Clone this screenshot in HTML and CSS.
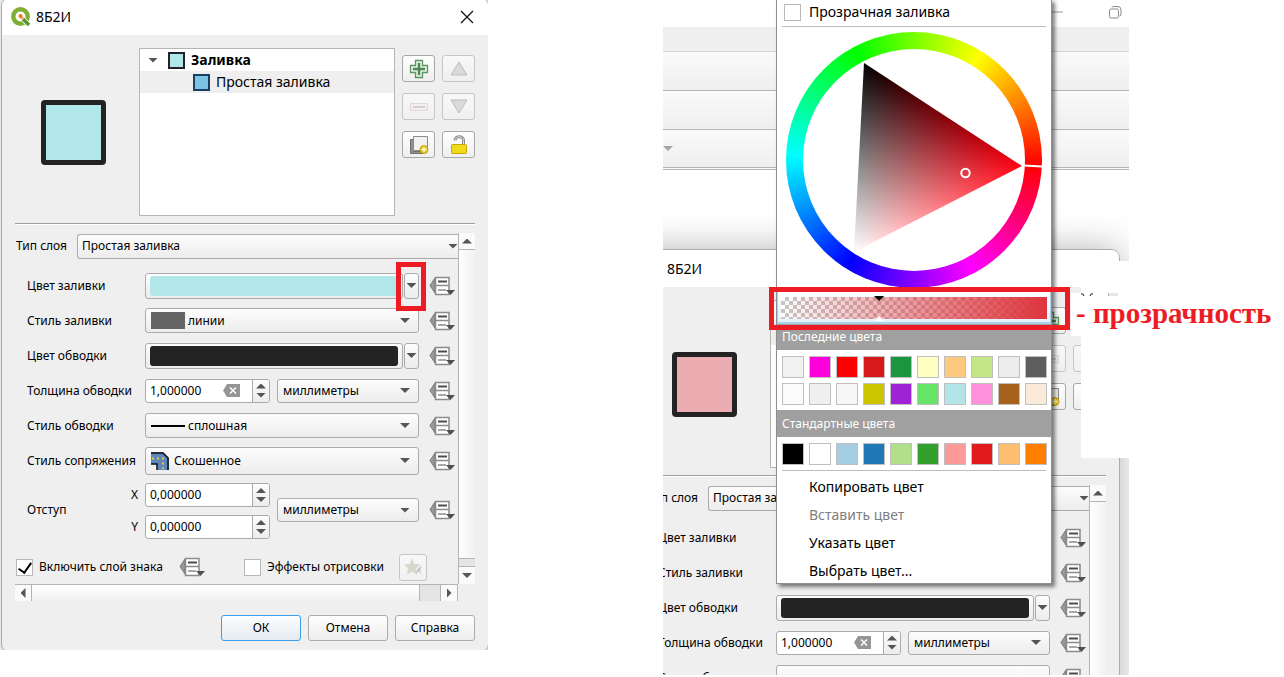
FILE: index.html
```html
<!DOCTYPE html>
<html lang="ru">
<head>
<meta charset="utf-8">
<title>8Б2И</title>
<link rel="stylesheet" href="styles.css">
</head>
<body>
<svg class="defs" aria-hidden="true">
  <symbol id="override" viewBox="0 0 27 20">
    <path d="M6 2 L1 9.500 L6 17 Z" fill="#999" stroke="#777"/>
    <path d="M6.500 1.500 H20 V18.500 H6.500 Z M6.500 9.500 H20" fill="#fff" stroke="#8b8b87" stroke-width="1.500"/>
    <path d="M9 5.500 H18" stroke="#4c4c4c" stroke-width="2"/>
    <path d="M9 14 H17" stroke="#8a8a8a" stroke-width="1.500"/>
    <path d="M17 14 H26 L21.500 19 Z" fill="#505050"/>
  </symbol>
  <symbol id="plus" viewBox="0 0 20 20">
    <path d="M6.500 1.500 H13.500 V6.500 H18.500 V13.500 H13.500 V18.500 H6.500 V13.500 H1.500 V6.500 H6.500 Z" fill="#e4f0e4" stroke="#5c9563" stroke-width="1.300"/>
    <path d="M10 4 V16 M4 10 H16" stroke="#4f8a56" stroke-width="2.500"/>
  </symbol>
  <symbol id="minus" viewBox="0 0 20 20">
    <path d="M1.500 6.500 H18.500 V13.500 H1.500 Z" fill="#f4efef" stroke="#e0d8d8"/>
    <path d="M4 10 H16" stroke="#d9d0d0" stroke-width="2"/>
  </symbol>
  <symbol id="up" viewBox="0 0 20 20"><path d="M10 3 L18 16 H2 Z" fill="#d8dadb" stroke="#b9bdc0"/></symbol>
  <symbol id="down" viewBox="0 0 20 20"><path d="M10 16 L2 3 H18 Z" fill="#d8dadb" stroke="#b9bdc0"/></symbol>
  <symbol id="copy" viewBox="0 0 20 20">
    <path d="M1.500 4.500 H4.500 V16.500 H15 V18.500 H1.500 Z" fill="#8e918c" stroke="#6f726d"/>
    <path d="M4.500 1.500 H18.500 V15.500 H4.500 Z" fill="#f1f1ef" stroke="#888a85"/>
    <circle cx="15" cy="14.500" r="4" fill="#e6c531" stroke="#c4a000"/>
    <path d="M15 11 L16 13.500 L18.500 14.500 L16 15.500 L15 18 L14 15.500 L11.500 14.500 L14 13.500 Z" fill="#fff6c8"/>
  </symbol>
  <symbol id="lock" viewBox="0 0 20 20">
    <path d="M6 5.500 C6 0.500 14.500 0.500 14.500 5.500 V10" fill="none" stroke="#8c8c8c" stroke-width="3"/>
    <path d="M6 5.500 C6 0.500 14.500 0.500 14.500 5.500 V10" fill="none" stroke="#dedede"/>
    <rect x="2.500" y="9.500" width="15" height="9" rx="1" fill="#f0da1c" stroke="#c9a800"/>
  </symbol>
  <symbol id="clear" viewBox="0 0 17 13">
    <path d="M0 6.500 L4 0 H17 V13 H4 Z" fill="#959595"/>
    <path d="M7 3.500 L13 9.500 M13 3.500 L7 9.500" stroke="#fff" stroke-width="1.500"/>
  </symbol>
</svg>

<main class="desk">

  <section class="shot shot-left">
    <div class="dialog">
      <header class="title">
        <svg class="logo" viewBox="0 0 20 20"><circle cx="9.500" cy="9.500" r="7.200" fill="none" stroke="#7fae33" stroke-width="4.400"/><path d="M11 11 L18.500 18.500" stroke="#fff" stroke-width="5"/><path d="M12 12 L18 18" stroke="#589632" stroke-width="3.500"/><path d="M9.500 9.500 L12 12" stroke="#f0b070" stroke-width="3"/><circle cx="9.500" cy="9" r="2" fill="#ee7913"/></svg>
        <h1 class="title-text">8Б2И</h1>
        <button class="close" aria-label="Закрыть"><svg viewBox="0 0 12 12"><path d="M0 0 L12 12 M12 0 L0 12" stroke="#111" stroke-width="1.300"/></svg></button>
      </header>
      <div class="body">
        <div class="head">
          <div class="preview"></div>
          <ul class="tree">
            <li class="node root"><i class="tri tri-down"></i><i class="chip"></i>Заливка</li>
            <li class="node leaf"><i class="chip chip-blue"></i>Простая заливка</li>
          </ul>
          <div class="tools">
            <button class="tool" aria-label="Добавить"><svg><use href="#plus"/></svg></button>
            <button class="tool off" aria-label="Выше" disabled><svg><use href="#up"/></svg></button>
            <button class="tool off" aria-label="Удалить" disabled><svg><use href="#minus"/></svg></button>
            <button class="tool off" aria-label="Ниже" disabled><svg><use href="#down"/></svg></button>
            <button class="tool" aria-label="Дублировать"><svg><use href="#copy"/></svg></button>
            <button class="tool" aria-label="Блокировка"><svg><use href="#lock"/></svg></button>
          </div>
        </div>
        <hr class="rule">
        <div class="scroll">
          <div class="pane">
            <div class="type">
              <label for="type1">Тип слоя</label>
              <div class="combo combo-cut"><select id="type1"><option>Простая заливка</option></select><i class="tri tri-down"></i></div>
            </div>
            <div class="form">
              <label for="fill1">Цвет заливки</label>
              <div class="color"><button id="fill1" class="swatch" aria-label="Цвет заливки"><i class="paint paint-cyan"></i></button><button class="drop drop-marked" aria-label="Меню цвета"><i class="tri tri-down"></i></button></div>
              <button class="over" aria-label="Переопределение"><svg><use href="#override"/></svg></button>

              <label for="style1">Стиль заливки</label>
              <div class="combo"><i class="block"></i><select id="style1"><option>линии</option></select><i class="tri tri-down"></i></div>
              <button class="over" aria-label="Переопределение"><svg><use href="#override"/></svg></button>

              <label for="stroke1">Цвет обводки</label>
              <div class="color"><button id="stroke1" class="swatch" aria-label="Цвет обводки"><i class="paint paint-dark"></i></button><button class="drop" aria-label="Меню цвета"><i class="tri tri-down"></i></button></div>
              <button class="over" aria-label="Переопределение"><svg><use href="#override"/></svg></button>

              <label for="width1">Толщина обводки</label>
              <div class="pair">
                <div class="spin"><input id="width1" value="1,000000"><svg class="clear"><use href="#clear"/></svg><span class="steps"><i class="tri tri-up"></i><i class="tri tri-down"></i></span></div>
                <div class="combo"><select aria-label="Единицы"><option>миллиметры</option></select><i class="tri tri-down"></i></div>
              </div>
              <button class="over" aria-label="Переопределение"><svg><use href="#override"/></svg></button>

              <label for="line1">Стиль обводки</label>
              <div class="combo"><i class="line"></i><select id="line1"><option>сплошная</option></select><i class="tri tri-down"></i></div>
              <button class="over" aria-label="Переопределение"><svg><use href="#override"/></svg></button>

              <label for="join1">Стиль сопряжения</label>
              <div class="combo combo-tall"><svg class="join" viewBox="0 0 18 18"><path d="M0 0 H12 L18 6 V18 H6 V12 H0 Z" fill="#5f87bb"/><path d="M0 1 H12 L17 6 V18 M0 12 H6 V18" fill="none" stroke="#111" stroke-width="1.500"/><path d="M1 6.500 H12 V17" fill="none" stroke="#e2d03a" stroke-width="2" stroke-dasharray="2 3"/></svg><select id="join1"><option>Скошенное</option></select><i class="tri tri-down"></i></div>
              <button class="over" aria-label="Переопределение"><svg><use href="#override"/></svg></button>

              <span>Отступ</span>
              <div class="pair">
                <div class="xy">
                  <div class="axis"><label for="x1">X</label><div class="spin"><input id="x1" value="0,000000"><span class="steps"><i class="tri tri-up"></i><i class="tri tri-down"></i></span></div></div>
                  <div class="axis"><label for="y1">Y</label><div class="spin"><input id="y1" value="0,000000"><span class="steps"><i class="tri tri-up"></i><i class="tri tri-down"></i></span></div></div>
                </div>
                <div class="combo"><select aria-label="Единицы отступа"><option>миллиметры</option></select><i class="tri tri-down"></i></div>
              </div>
              <button class="over" aria-label="Переопределение"><svg><use href="#override"/></svg></button>
            </div>
            <div class="options">
              <label class="check"><input type="checkbox" checked>Включить слой знака</label>
              <button class="over" aria-label="Переопределение"><svg><use href="#override"/></svg></button>
              <label class="check check-fx"><input type="checkbox">Эффекты отрисовки</label>
              <button class="star" aria-label="Настроить эффекты" disabled><svg viewBox="0 0 20 20"><path d="M9 1 L11.500 7 L17.500 7.500 L13 11.500 L14.500 17.500 L9 14.500 L4 17.500 L5 11.500 L1 7.500 L7 7 Z" fill="#d9d7cd"/><path d="M13 18 Q13 11 19 9 Q16 12 18 17 L15 14 Z" fill="#c4c4c4"/></svg></button>
            </div>
          </div>
          <div class="vbar"><span class="cap cap-top"><i class="tri tri-up"></i></span><span class="track"></span><span class="rest"></span><span class="cap"><i class="tri tri-down"></i></span></div>
          <div class="hbar"><span class="cap cap-left"><i class="tri tri-left"></i></span><span class="track"></span><span class="rest"></span><span class="cap cap-right"><i class="tri tri-right"></i></span></div>
        </div>
        <footer class="actions">
          <button class="act act-main">ОК</button>
          <button class="act">Отмена</button>
          <button class="act">Справка</button>
        </footer>
      </div>
    </div>
    <span class="mark mark-drop"></span>
  </section>

  <section class="shot shot-right">
    <div class="app">
      <div class="app-title"><svg class="app-min" viewBox="0 0 16 2"><path d="M0 1 H16" stroke="#999"/></svg><svg class="app-restore" viewBox="0 0 13 13"><rect x="0.500" y="3" width="9" height="9" rx="1.500" fill="none" stroke="#8c8c8c"/><path d="M3 1.500 Q3 0.500 5 0.500 H9 Q12 0.500 12 4 V9 L10.500 10" fill="none" stroke="#8c8c8c"/></svg></div>
      <div class="app-menu"></div>
      <div class="app-bar"></div>
      <div class="app-bar"></div>
      <div class="app-bar app-bar-last"><i class="tri tri-down"></i></div>
    </div>

    <div class="dialog dialog-back">
      <header class="title title-back"><h2 class="title-text">8Б2И</h2></header>
      <div class="body">
        <div class="head">
          <div class="preview preview-pink"></div>
          <ul class="tree"><li class="node root"></li><li class="node leaf"></li></ul>
          <div class="tools">
            <button class="tool" aria-label="Добавить"><svg><use href="#plus"/></svg></button>
            <button class="tool off" aria-label="Выше" disabled><svg><use href="#up"/></svg></button>
            <button class="tool off" aria-label="Удалить" disabled><svg><use href="#minus"/></svg></button>
            <button class="tool off" aria-label="Ниже" disabled><svg><use href="#down"/></svg></button>
            <button class="tool" aria-label="Дублировать"><svg><use href="#copy"/></svg></button>
            <button class="tool" aria-label="Блокировка"><svg><use href="#lock"/></svg></button>
          </div>
        </div>
        <hr class="rule">
        <div class="scroll">
          <div class="pane">
            <div class="type">
              <label for="type2">Тип слоя</label>
              <div class="combo combo-cut"><select id="type2"><option>Простая заливка</option></select><i class="tri tri-down"></i></div>
            </div>
            <div class="form">
              <span>Цвет заливки</span>
              <span></span>
              <button class="over" aria-label="Переопределение"><svg><use href="#override"/></svg></button>

              <span>Стиль заливки</span>
              <span></span>
              <button class="over" aria-label="Переопределение"><svg><use href="#override"/></svg></button>

              <label for="stroke2">Цвет обводки</label>
              <div class="color"><button id="stroke2" class="swatch" aria-label="Цвет обводки"><i class="paint paint-dark"></i></button><button class="drop" aria-label="Меню цвета"><i class="tri tri-down"></i></button></div>
              <button class="over" aria-label="Переопределение"><svg><use href="#override"/></svg></button>

              <label for="width2">Толщина обводки</label>
              <div class="pair">
                <div class="spin"><input id="width2" value="1,000000"><svg class="clear"><use href="#clear"/></svg><span class="steps"><i class="tri tri-up"></i><i class="tri tri-down"></i></span></div>
                <div class="combo"><select aria-label="Единицы"><option>миллиметры</option></select><i class="tri tri-down"></i></div>
              </div>
              <button class="over" aria-label="Переопределение"><svg><use href="#override"/></svg></button>

              <span>Стиль обводки</span>
              <div class="combo"></div>
              <button class="over" aria-label="Переопределение"><svg><use href="#override"/></svg></button>
            </div>
          </div>
          <div class="vbar"><span class="cap cap-top"><i class="tri tri-up"></i></span><span class="track"></span></div>
        </div>
      </div>
    </div>

    <span class="patch patch-big"></span>
    <span class="patch patch-small"></span>
    <svg class="scrap" viewBox="0 0 37 3"><path d="M0 1 H2 L3 3 M9 3 L10 1 H12" fill="none" stroke="#222"/><path d="M27 0 H37 V3 H27 Z" fill="#e6e6e6"/><path d="M27.500 0 V3" stroke="#b5b5b5"/></svg>

    <div class="menu">
      <label class="menu-check"><input type="checkbox">Прозрачная заливка</label>
      <hr class="menu-rule">
      <svg class="wheel-defs" aria-hidden="true"><defs>
        <clipPath id="tri"><path d="M78 31 L236 134 L68 220 Z"/></clipPath>
        <linearGradient id="gr" gradientUnits="userSpaceOnUse" x1="73" y1="126" x2="236" y2="134"><stop offset="0" stop-color="#000"/><stop offset="1" stop-color="#ff0010"/></linearGradient>
        <linearGradient id="gw" gradientUnits="userSpaceOnUse" x1="157" y1="82" x2="68" y2="220"><stop offset="0" stop-color="#000"/><stop offset="1" stop-color="#fff"/></linearGradient>
      </defs></svg>
      <div class="wheel">
        <svg viewBox="0 0 256 256">
          <circle cx="128" cy="128" r="111" fill="#fff"/>
          <g class="blend" clip-path="url(#tri)">
            <rect x="60" y="24" width="184" height="204" fill="url(#gr)"/>
            <rect class="add" x="60" y="24" width="184" height="204" fill="url(#gw)"/>
          </g>
          <path d="M238 133.500 L256 134.500" stroke="#fff" stroke-width="2"/>
          <circle cx="179.500" cy="141" r="4.200" fill="none" stroke="#fff" stroke-width="2"/>
        </svg>
      </div>
      <div class="alpha"><div class="ramp"><i class="knob knob-top"></i><i class="knob knob-bottom"></i></div></div>
      <h3 class="group">Последние цвета</h3>
      <div class="cells">
        <i class="cell c01"></i><i class="cell c02"></i><i class="cell c03"></i><i class="cell c04"></i><i class="cell c05"></i><i class="cell c06"></i><i class="cell c07"></i><i class="cell c08"></i><i class="cell c09"></i><i class="cell c10"></i>
        <i class="cell c11"></i><i class="cell c12"></i><i class="cell c13"></i><i class="cell c14"></i><i class="cell c15"></i><i class="cell c16"></i><i class="cell c17"></i><i class="cell c18"></i><i class="cell c19"></i><i class="cell c20"></i>
      </div>
      <h3 class="group group-std">Стандартные цвета</h3>
      <div class="cells">
        <i class="cell c21"></i><i class="cell c22"></i><i class="cell c23"></i><i class="cell c24"></i><i class="cell c25"></i><i class="cell c26"></i><i class="cell c27"></i><i class="cell c28"></i><i class="cell c29"></i><i class="cell c30"></i>
      </div>
      <hr class="menu-rule">
      <button class="item">Копировать цвет</button>
      <button class="item" disabled>Вставить цвет</button>
      <button class="item">Указать цвет</button>
      <button class="item">Выбрать цвет...</button>
    </div>
    <span class="mark mark-alpha"></span>
  </section>

  <p class="note">- прозрачность</p>
</main>
</body>
</html>
```
FILE: styles.css
```css
* { box-sizing: border-box; }
body {
  margin: 0;
  background: #fff;
  color: #000;
  font: 12px/16px "Noto Sans", "Open Sans", sans-serif;
}
button, input, select { font: inherit; color: inherit; margin: 0; padding: 0; }
button { border: 0; background: none; }
h1, h2, h3, p, ul { margin: 0; padding: 0; font-weight: 400; list-style: none; }
svg { display: block; }
.defs, .wheel-defs { position: absolute; width: 0; height: 0; }

/* free canvas with two windows and notes on it */
.desk { position: relative; min-height: 677px; overflow: hidden; }
.shot { position: absolute; top: 0; overflow: hidden; }
.shot-left { left: 0; width: 488px; height: 650px; background: #e6e6e6; }
.shot-right { left: 663px; width: 466px; height: 675px; background: #fff; }

.dialog {
  position: absolute;
  top: -3px;
  left: 1px;
  width: 488px;
  border: 1px solid #ababab;
  border-radius: 9px;
  background: #efefef;
  overflow: hidden;
}
.dialog-back {
  top: 249px;
  left: -31px;
  box-shadow: 0 0 36px rgba(0, 0, 0, .3);
}

.title { display: flex; align-items: center; gap: 5px; height: 37px; padding: 0 15px 0 9px; background: #fff; }
.title-back { padding-left: 34px; }
.logo { width: 20px; height: 20px; }
.title-text { flex: 1; font-size: 14px; line-height: 20px; }
.close svg { width: 12px; height: 12px; overflow: visible; }

.body { padding: 13px 13px 11px; }
.head { display: grid; grid-template-columns: 117px 1fr 73px; gap: 7px; height: 168px; }
.preview {
  align-self: center;
  justify-self: center;
  width: 65px;
  height: 65px;
  border: 5px solid #232323;
  border-radius: 4px;
  background: #b2e7ea;
}
.preview-pink { background: #ebadb1; }
.tree { border: 1px solid #b5b5b5; background: #fff; font-size: 14px; line-height: 22px; }
.node { display: flex; align-items: center; height: 22px; }
.root { padding-left: 8px; font-weight: 700; }
.leaf { padding-left: 53px; background: #efefef; }
.chip { width: 17px; height: 17px; margin-right: 6px; border: 2px solid #232323; background: #b2e7ea; }
.root .tri { margin-right: 10px; }
.chip-blue { border-color: #1b3f60; background: #7cc4e4; }

.tools { display: grid; grid-template-columns: 33px 33px; grid-auto-rows: 27px; gap: 11px 7px; padding-top: 7px; }
.tool, .star {
  display: grid;
  place-items: center;
  border: 1px solid #a8a8a8;
  border-radius: 3px;
  background: linear-gradient(#fefefe, #efefef);
}
.tool svg { width: 20px; height: 20px; }
.off, .star { border-color: #c6c6c6; background: linear-gradient(#f8f8f8, #f0f0f0); }
.rule { height: 2px; margin: 7px 0 8px; border: 0; border-top: 1px solid #a0a0a0; background: #fff; }

.scroll { display: grid; grid-template-columns: 1fr 17px; }
.pane { min-width: 0; }
.type { display: flex; align-items: center; gap: 8px; height: 26px; padding-left: 1px; }
.type label { width: 53px; white-space: nowrap; }
.form {
  display: grid;
  grid-template-columns: 118px 1fr 27px;
  grid-auto-rows: 35px;
  grid-template-rows: repeat(6, 35px) auto;
  align-items: center;
  padding: 9px 2px 0 12px;
}
.form > label, .form > span { white-space: nowrap; }
.form .over { justify-self: end; }

.combo {
  display: flex;
  align-items: center;
  flex: 1;
  min-width: 0;
  height: 25px;
  padding: 0 8px 0 5px;
  border: 1px solid #ababab;
  border-radius: 3px;
  background: linear-gradient(#fdfdfd, #ececec);
}
.form > .combo { margin-right: 10px; }
.combo select { flex: 1; min-width: 0; appearance: none; border: 0; background: none; outline: 0; }
.combo-cut { padding: 0 0 0 4px; border-right: 0; border-radius: 3px 0 0 3px; }
.combo-tall { height: 28px; }
.block { width: 34px; height: 17px; margin-right: 3px; background: #646464; }
.line { width: 34px; height: 2px; margin-right: 3px; background: #000; }
.join { width: 18px; height: 18px; margin-right: 5px; }

.color { display: flex; gap: 1px; height: 26px; margin-right: 10px; }
.swatch, .drop { display: flex; align-items: center; justify-content: center; border: 1px solid #ababab; border-radius: 3px; background: linear-gradient(#fdfdfd, #ececec); }
.swatch { flex: 1; padding: 0 4px; }
.paint { flex: 1; height: 20px; border-radius: 3px; }
.paint-cyan { background: #b2e7ea; }
.paint-dark { background: #232323; }
.drop { width: 15px; }

.pair { display: flex; align-items: center; gap: 7px; margin-right: 10px; }
.pair > .combo { height: 24px; }
.spin { position: relative; display: flex; width: 125px; height: 24px; border: 1px solid #ababab; border-radius: 3px; background: #fff; overflow: hidden; }
.spin input { flex: 1; min-width: 0; padding-left: 4px; border: 0; background: none; outline: 0; }
.clear { align-self: center; width: 17px; height: 13px; margin-right: 12px; }
.steps { display: flex; flex-direction: column; align-items: center; justify-content: center; gap: 4px; width: 17px; border-left: 1px solid #ababab; background: linear-gradient(#fdfdfd, #ececec); }
.xy { display: grid; gap: 8px; padding: 5px 0 3px; }
.axis { position: relative; }
.axis label { position: absolute; right: 100%; top: 4px; margin-right: 7px; }

.over svg { width: 27px; height: 20px; }
.options { display: flex; align-items: center; height: 42px; padding: 8px 31px 0 1px; }
.check, .menu-check { display: flex; align-items: center; gap: 6px; white-space: nowrap; }
.check input, .menu-check input { appearance: none; width: 17px; height: 17px; border: 1px solid #b8b8b8; background: #fff; }
.check input:checked { display: grid; place-items: center; }
.check input:checked::before { content: ""; width: 6px; height: 11px; border: solid #000; border-width: 0 2px 2px 0; transform: rotate(35deg); margin-bottom: 3px; }
.options .over { margin-left: auto; }
.check-fx { margin-left: 38px; }
.star { width: 28px; height: 27px; margin-left: 15px; }
.star svg { width: 20px; height: 20px; }

.tri { flex: none; width: 10px; height: 5px; background: #555; }
.tri-down { clip-path: polygon(0 0, 100% 0, 50% 100%); }
.tri-up { clip-path: polygon(50% 0, 100% 100%, 0 100%); }
.tri-left { width: 5px; height: 10px; clip-path: polygon(0 50%, 100% 0, 100% 100%); }
.tri-right { width: 5px; height: 10px; clip-path: polygon(0 0, 100% 50%, 0 100%); }

.vbar { display: flex; flex-direction: column; border-left: 1px solid #b5b5b5; }
.vbar .track { flex: 1; background: linear-gradient(90deg, #fff, #f1f1f1); }
.cap { display: grid; place-items: center; height: 17px; background: #fafafa; }
.cap-top { border-bottom: 1px solid #b5b5b5; }
.vbar .rest { height: 9px; border: solid #b5b5b5; border-width: 1px 0; background: #e4e4e4; }
.hbar { display: flex; grid-column: 1 / 2; border-top: 1px solid #b5b5b5; height: 17px; }
.hbar .track { flex: 1; background: linear-gradient(#fff, #f1f1f1); }
.hbar .cap { width: 17px; height: 16px; }
.cap-left, .cap-right { border-right: 1px solid #b5b5b5; }
.hbar .rest { width: 22px; border: solid #b5b5b5; border-width: 0 1px; background: #e4e4e4; }

.actions { display: flex; justify-content: flex-end; gap: 7px; margin-top: 14px; }
.act { width: 80px; height: 26px; border: 1px solid #ababab; border-radius: 3px; background: linear-gradient(#fefefe, #ededed); }
.act-main { border-color: #3d9fea; background: linear-gradient(#fcfdfe, #e4eaef); }

/* main window behind the dialog */
.app-title { display: flex; justify-content: flex-end; align-items: flex-start; gap: 46px; height: 27px; padding: 6px 7px 0 0; background: #fff; }
.app-min { width: 16px; height: 2px; margin-top: 5px; }
.app-restore { width: 13px; height: 13px; }
.app-menu { height: 25px; border-bottom: 1px solid #d5d5d5; background: #efefef; }
.app-bar { height: 39px; border-bottom: 1px solid #b5b5b5; background: linear-gradient(#fafafa, #efefef); }
.app-bar-last { display: flex; align-items: center; height: 40px; border-bottom: 3px double #b5b5b5; }
.app-bar-last .tri { background: #a5a5a5; }

.patch { position: absolute; background: #fff; }
.patch-big { left: 418px; top: 261px; width: 48px; height: 197px; }
.patch-small { left: 408px; top: 293px; width: 10px; height: 43px; }
.scrap { position: absolute; left: 418px; top: 293px; width: 37px; height: 3px; }

/* colour menu */
.menu {
  position: absolute;
  left: 113px;
  top: -1px;
  width: 276px;
  border: 1px solid #8f8f8f;
  background: #fff;
  box-shadow: 3px 3px 4px rgba(0, 0, 0, .5);
  font-size: 14px;
}
.menu-check { gap: 8px; height: 26px; padding: 0 0 2px 7px; }
.menu-rule { height: 1px; margin: 0 5px; border: 0; background: #bdbdbd; }
.wheel {
  width: 256px;
  height: 256px;
  margin: 5px auto 3px;
  border-radius: 50%;
  background: conic-gradient(from 92deg, #f00, #f0f, #00f, #0ff, #0f0, #ff0, #f00);
}
.blend { isolation: isolate; }
.add { mix-blend-mode: plus-lighter; }
.alpha { height: 33px; padding: 5px 3px 6px; border: 1px solid #a8d3ea; border-bottom-width: 2px; background: linear-gradient(#fbfdff, #e5f1fb); }
.ramp {
  position: relative;
  height: 22px;
  background:
    linear-gradient(90deg, rgba(222, 52, 60, 0), rgb(222, 52, 60)),
    repeating-conic-gradient(#c6c6c6 0 25%, #fff 0 50%) 0 0 / 8px 8px;
}
.knob { position: absolute; left: 35%; width: 10px; height: 5px; }
.knob-top { top: -1px; background: #000; clip-path: polygon(0 0, 100% 0, 50% 100%); }
.knob-bottom { bottom: -2px; background: #fff; clip-path: polygon(50% 0, 100% 100%, 0 100%); }
.group { height: 26px; padding: 0 5px; background: #a0a0a0; color: #fff; font-size: 12px; line-height: 26px; }
.group-std { height: 27px; line-height: 27px; }
.cells { display: grid; grid-template-columns: repeat(10, 22px); gap: 5px; padding: 6px 5px 5px; }
.cell { height: 22px; border: 1px solid #bfbfbf; }
.item { display: block; width: 100%; height: 28px; padding: 4px 0 0 32px; text-align: left; }
.item:disabled { color: #808080; }
.c01 { background: #f1f1f1; } .c02 { background: #ff00dc; } .c03 { background: #f00; } .c04 { background: #d7191c; } .c05 { background: #1a9641; }
.c06 { background: #ffffc0; } .c07 { background: #fdc980; } .c08 { background: #c4e687; } .c09 { background: #ededed; } .c10 { background: #5e5e5e; }
.c11 { background: #fbfbfb; } .c12 { background: #efefef; } .c13 { background: #f7f7f7; } .c14 { background: #cdc400; } .c15 { background: #9f22d7; }
.c16 { background: #67e367; } .c17 { background: #b2e4e8; } .c18 { background: #ff90dc; } .c19 { background: #a6611a; } .c20 { background: #faeada; }
.c21 { background: #000; } .c22 { background: #fff; } .c23 { background: #a6cee3; } .c24 { background: #1f78b4; } .c25 { background: #b2df8a; }
.c26 { background: #33a02c; } .c27 { background: #fb9a99; } .c28 { background: #e31a1c; } .c29 { background: #fdbf6f; } .c30 { background: #ff7f00; }

/* annotations */
.mark { position: absolute; border: 5px solid #ed1c24; }
.mark-drop { left: 396px; top: 262px; width: 30px; height: 49px; }
.mark-alpha { left: 106px; top: 287px; width: 301px; height: 43px; }
.note { position: absolute; left: 1076px; top: 298px; color: #ed1c24; font: 700 29px/30px "Liberation Serif", serif; white-space: nowrap; }
```
